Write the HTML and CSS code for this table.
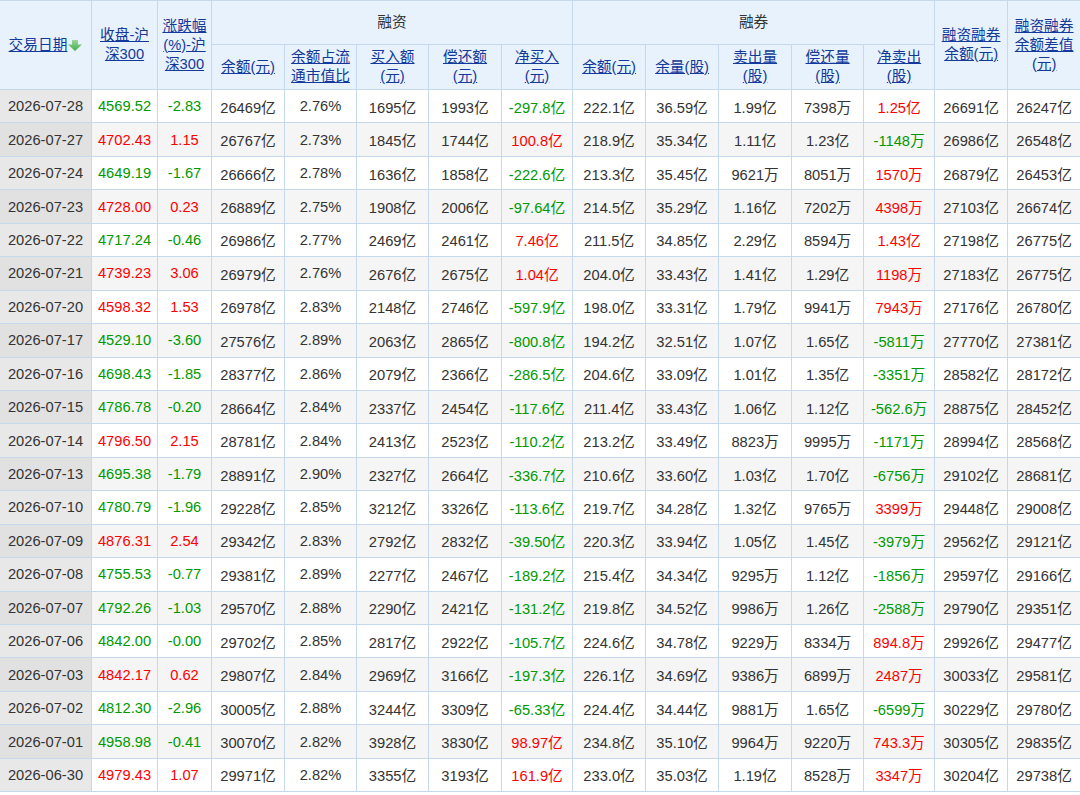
FILE: index.html
```html
<!DOCTYPE html>
<html lang="zh-CN">
<head>
<meta charset="utf-8">
<title>融资融券-沪深300</title>
<link rel="stylesheet" href="styles.css">
</head>
<body>
<table class="rzrq">
<colgroup>
<col class="c-date"><col class="c-close"><col class="c-chg">
<col class="c73"><col class="c72"><col class="c72"><col class="c73"><col class="c71">
<col class="c73"><col class="c73"><col class="c73"><col class="c72"><col class="c71">
<col class="c73"><col class="c73">
</colgroup>
<thead>
<tr class="h1">
<th rowspan="2"><a href="#">交易日期</a><svg class="sort" width="14" height="11" viewBox="0 0 14 11"><defs><linearGradient id="ga" x1="0" y1="0" x2="0" y2="1"><stop offset="0" stop-color="#9bd89b"/><stop offset="1" stop-color="#3fae4a"/></linearGradient></defs><path d="M4 0H10V4.5H14L7 11L0 4.5H4Z" fill="url(#ga)"/></svg></th>
<th rowspan="2"><a href="#">收盘-沪深300</a></th>
<th rowspan="2"><a href="#">涨跌幅(%)-沪深300</a></th>
<th colspan="5" class="grp">融资</th>
<th colspan="5" class="grp">融券</th>
<th rowspan="2"><a href="#">融资融券余额(元)</a></th>
<th rowspan="2"><a href="#">融资融券余额差值(元)</a></th>
</tr>
<tr class="h2">
<th><a href="#">余额(元)</a></th>
<th><a href="#">余额占流通市值比</a></th>
<th><a href="#">买入额(元)</a></th>
<th><a href="#">偿还额(元)</a></th>
<th><a href="#">净买入(元)</a></th>
<th><a href="#">余额(元)</a></th>
<th><a href="#">余量(股)</a></th>
<th><a href="#">卖出量(股)</a></th>
<th><a href="#">偿还量(股)</a></th>
<th><a href="#">净卖出(股)</a></th>
</tr>
</thead>
<tbody>
<tr><td class="d">2026-07-28</td><td class="g">4569.52</td><td class="g">-2.83</td><td>26469亿</td><td>2.76%</td><td>1695亿</td><td>1993亿</td><td class="g">-297.8亿</td><td>222.1亿</td><td>36.59亿</td><td>1.99亿</td><td>7398万</td><td class="r">1.25亿</td><td>26691亿</td><td>26247亿</td></tr>
<tr><td class="d">2026-07-27</td><td class="r">4702.43</td><td class="r">1.15</td><td>26767亿</td><td>2.73%</td><td>1845亿</td><td>1744亿</td><td class="r">100.8亿</td><td>218.9亿</td><td>35.34亿</td><td>1.11亿</td><td>1.23亿</td><td class="g">-1148万</td><td>26986亿</td><td>26548亿</td></tr>
<tr><td class="d">2026-07-24</td><td class="g">4649.19</td><td class="g">-1.67</td><td>26666亿</td><td>2.78%</td><td>1636亿</td><td>1858亿</td><td class="g">-222.6亿</td><td>213.3亿</td><td>35.45亿</td><td>9621万</td><td>8051万</td><td class="r">1570万</td><td>26879亿</td><td>26453亿</td></tr>
<tr><td class="d">2026-07-23</td><td class="r">4728.00</td><td class="r">0.23</td><td>26889亿</td><td>2.75%</td><td>1908亿</td><td>2006亿</td><td class="g">-97.64亿</td><td>214.5亿</td><td>35.29亿</td><td>1.16亿</td><td>7202万</td><td class="r">4398万</td><td>27103亿</td><td>26674亿</td></tr>
<tr><td class="d">2026-07-22</td><td class="g">4717.24</td><td class="g">-0.46</td><td>26986亿</td><td>2.77%</td><td>2469亿</td><td>2461亿</td><td class="r">7.46亿</td><td>211.5亿</td><td>34.85亿</td><td>2.29亿</td><td>8594万</td><td class="r">1.43亿</td><td>27198亿</td><td>26775亿</td></tr>
<tr><td class="d">2026-07-21</td><td class="r">4739.23</td><td class="r">3.06</td><td>26979亿</td><td>2.76%</td><td>2676亿</td><td>2675亿</td><td class="r">1.04亿</td><td>204.0亿</td><td>33.43亿</td><td>1.41亿</td><td>1.29亿</td><td class="r">1198万</td><td>27183亿</td><td>26775亿</td></tr>
<tr><td class="d">2026-07-20</td><td class="r">4598.32</td><td class="r">1.53</td><td>26978亿</td><td>2.83%</td><td>2148亿</td><td>2746亿</td><td class="g">-597.9亿</td><td>198.0亿</td><td>33.31亿</td><td>1.79亿</td><td>9941万</td><td class="r">7943万</td><td>27176亿</td><td>26780亿</td></tr>
<tr><td class="d">2026-07-17</td><td class="g">4529.10</td><td class="g">-3.60</td><td>27576亿</td><td>2.89%</td><td>2063亿</td><td>2865亿</td><td class="g">-800.8亿</td><td>194.2亿</td><td>32.51亿</td><td>1.07亿</td><td>1.65亿</td><td class="g">-5811万</td><td>27770亿</td><td>27381亿</td></tr>
<tr><td class="d">2026-07-16</td><td class="g">4698.43</td><td class="g">-1.85</td><td>28377亿</td><td>2.86%</td><td>2079亿</td><td>2366亿</td><td class="g">-286.5亿</td><td>204.6亿</td><td>33.09亿</td><td>1.01亿</td><td>1.35亿</td><td class="g">-3351万</td><td>28582亿</td><td>28172亿</td></tr>
<tr><td class="d">2026-07-15</td><td class="g">4786.78</td><td class="g">-0.20</td><td>28664亿</td><td>2.84%</td><td>2337亿</td><td>2454亿</td><td class="g">-117.6亿</td><td>211.4亿</td><td>33.43亿</td><td>1.06亿</td><td>1.12亿</td><td class="g">-562.6万</td><td>28875亿</td><td>28452亿</td></tr>
<tr><td class="d">2026-07-14</td><td class="r">4796.50</td><td class="r">2.15</td><td>28781亿</td><td>2.84%</td><td>2413亿</td><td>2523亿</td><td class="g">-110.2亿</td><td>213.2亿</td><td>33.49亿</td><td>8823万</td><td>9995万</td><td class="g">-1171万</td><td>28994亿</td><td>28568亿</td></tr>
<tr><td class="d">2026-07-13</td><td class="g">4695.38</td><td class="g">-1.79</td><td>28891亿</td><td>2.90%</td><td>2327亿</td><td>2664亿</td><td class="g">-336.7亿</td><td>210.6亿</td><td>33.60亿</td><td>1.03亿</td><td>1.70亿</td><td class="g">-6756万</td><td>29102亿</td><td>28681亿</td></tr>
<tr><td class="d">2026-07-10</td><td class="g">4780.79</td><td class="g">-1.96</td><td>29228亿</td><td>2.85%</td><td>3212亿</td><td>3326亿</td><td class="g">-113.6亿</td><td>219.7亿</td><td>34.28亿</td><td>1.32亿</td><td>9765万</td><td class="r">3399万</td><td>29448亿</td><td>29008亿</td></tr>
<tr><td class="d">2026-07-09</td><td class="r">4876.31</td><td class="r">2.54</td><td>29342亿</td><td>2.83%</td><td>2792亿</td><td>2832亿</td><td class="g">-39.50亿</td><td>220.3亿</td><td>33.94亿</td><td>1.05亿</td><td>1.45亿</td><td class="g">-3979万</td><td>29562亿</td><td>29121亿</td></tr>
<tr><td class="d">2026-07-08</td><td class="g">4755.53</td><td class="g">-0.77</td><td>29381亿</td><td>2.89%</td><td>2277亿</td><td>2467亿</td><td class="g">-189.2亿</td><td>215.4亿</td><td>34.34亿</td><td>9295万</td><td>1.12亿</td><td class="g">-1856万</td><td>29597亿</td><td>29166亿</td></tr>
<tr><td class="d">2026-07-07</td><td class="g">4792.26</td><td class="g">-1.03</td><td>29570亿</td><td>2.88%</td><td>2290亿</td><td>2421亿</td><td class="g">-131.2亿</td><td>219.8亿</td><td>34.52亿</td><td>9986万</td><td>1.26亿</td><td class="g">-2588万</td><td>29790亿</td><td>29351亿</td></tr>
<tr><td class="d">2026-07-06</td><td class="g">4842.00</td><td class="g">-0.00</td><td>29702亿</td><td>2.85%</td><td>2817亿</td><td>2922亿</td><td class="g">-105.7亿</td><td>224.6亿</td><td>34.78亿</td><td>9229万</td><td>8334万</td><td class="r">894.8万</td><td>29926亿</td><td>29477亿</td></tr>
<tr><td class="d">2026-07-03</td><td class="r">4842.17</td><td class="r">0.62</td><td>29807亿</td><td>2.84%</td><td>2969亿</td><td>3166亿</td><td class="g">-197.3亿</td><td>226.1亿</td><td>34.69亿</td><td>9386万</td><td>6899万</td><td class="r">2487万</td><td>30033亿</td><td>29581亿</td></tr>
<tr><td class="d">2026-07-02</td><td class="g">4812.30</td><td class="g">-2.96</td><td>30005亿</td><td>2.88%</td><td>3244亿</td><td>3309亿</td><td class="g">-65.33亿</td><td>224.4亿</td><td>34.44亿</td><td>9881万</td><td>1.65亿</td><td class="g">-6599万</td><td>30229亿</td><td>29780亿</td></tr>
<tr><td class="d">2026-07-01</td><td class="g">4958.98</td><td class="g">-0.41</td><td>30070亿</td><td>2.82%</td><td>3928亿</td><td>3830亿</td><td class="r">98.97亿</td><td>234.8亿</td><td>35.10亿</td><td>9964万</td><td>9220万</td><td class="r">743.3万</td><td>30305亿</td><td>29835亿</td></tr>
<tr><td class="d">2026-06-30</td><td class="r">4979.43</td><td class="r">1.07</td><td>29971亿</td><td>2.82%</td><td>3355亿</td><td>3193亿</td><td class="r">161.9亿</td><td>233.0亿</td><td>35.03亿</td><td>1.19亿</td><td>8528万</td><td class="r">3347万</td><td>30204亿</td><td>29738亿</td></tr>
</tbody>
</table>
</body>
</html>
```

FILE: styles.css
```css
html, body {
  margin: 0;
  padding: 0;
  background: #ffffff;
}

body {
  font-family: "Liberation Sans", Arial, "Noto Sans CJK SC", sans-serif;
  font-size: 14.7px;
  color: #333333;
  overflow: hidden;
}

.rzrq {
  border-collapse: collapse;
  table-layout: fixed;
  width: 1081px;
  margin-left: -1px;
}

.c-date { width: 92px; }
.c-close { width: 66px; }
.c-chg { width: 54px; }
.c71 { width: 71px; }
.c72 { width: 72px; }
.c73 { width: 73px; }

.rzrq th,
.rzrq td {
  border: 1px solid #c5d8ec;
  text-align: center;
  vertical-align: middle;
  padding: 0 3px;
  overflow: hidden;
}

.rzrq th {
  background: #e8f2fd;
  font-weight: normal;
  line-height: 19px;
  color: #333333;
}

.rzrq th a {
  color: #12399b;
  text-decoration: underline;
}

.h1 { height: 44px; }
.h2 { height: 45px; }

.grp {
  color: #333333;
}

.sort {
  vertical-align: -1px;
  margin-left: 1px;
}

.rzrq tbody tr {
  height: 33.45px;
}

.rzrq td {
  white-space: nowrap;
  padding: 0;
}

.rzrq tbody tr:nth-child(even) td {
  background: #f5f5f5;
}

.rzrq tbody td.d {
  background: #e8e8e8;
}

.rzrq tbody tr:nth-child(even) td.d {
  background: #e1e1e1;
}

.rzrq td.g { color: #009900; }
.rzrq td.r { color: #ff0000; }
```
